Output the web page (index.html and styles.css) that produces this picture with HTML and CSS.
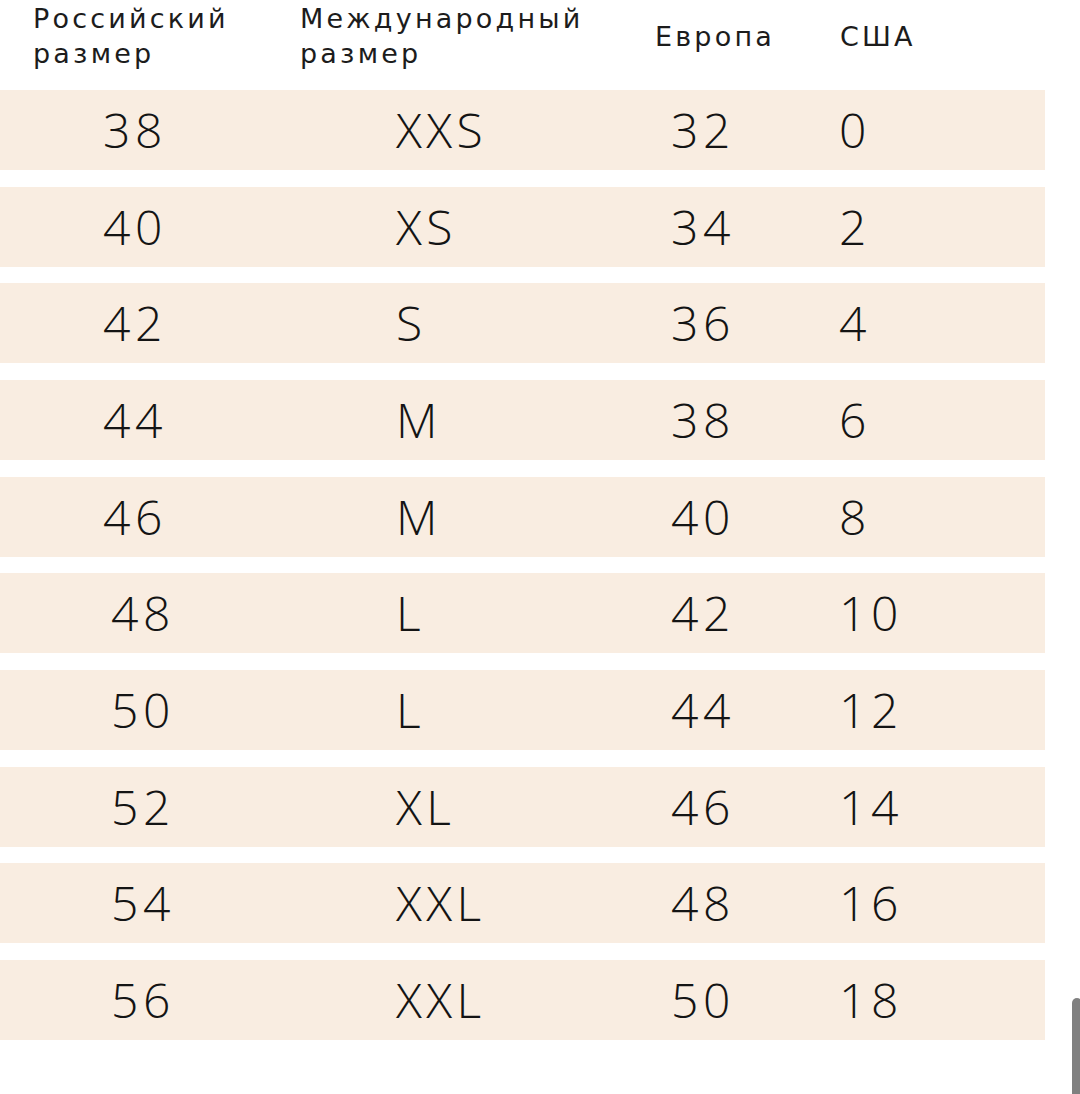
FILE: index.html
```html
<!DOCTYPE html>
<html lang="ru">
<head>
<meta charset="utf-8">
<title>Таблица размеров</title>
<link rel="stylesheet" href="styles.css">
</head>
<body>
<div class="page">
  <div class="head">
    <div class="hcell">Российский<br>размер</div>
    <div class="hcell">Международный<br>размер</div>
    <div class="hcell">Европа</div>
    <div class="hcell">США</div>
  </div>
  <div class="rows">
    <div class="row"><span class="c1">38</span><span>XXS</span><span>32</span><span>0</span></div>
    <div class="row"><span class="c1">40</span><span>XS</span><span>34</span><span>2</span></div>
    <div class="row"><span class="c1">42</span><span>S</span><span>36</span><span>4</span></div>
    <div class="row"><span class="c1">44</span><span>M</span><span>38</span><span>6</span></div>
    <div class="row"><span class="c1">46</span><span>M</span><span>40</span><span>8</span></div>
    <div class="row shift"><span class="c1">48</span><span>L</span><span>42</span><span>10</span></div>
    <div class="row shift"><span class="c1">50</span><span>L</span><span>44</span><span>12</span></div>
    <div class="row shift"><span class="c1">52</span><span>XL</span><span>46</span><span>14</span></div>
    <div class="row shift"><span class="c1">54</span><span>XXL</span><span>48</span><span>16</span></div>
    <div class="row shift"><span class="c1">56</span><span>XXL</span><span>50</span><span>18</span></div>
  </div>
  <div class="scrollbar"></div>
</div>
</body>
</html>
```

FILE: styles.css
```css
html, body {
  margin: 0;
  padding: 0;
  background: #ffffff;
}
body {
  font-family: "Open Sans", "DejaVu Sans", sans-serif;
  color: #1a1a1a;
  width: 1080px;
  height: 1094px;
  overflow: hidden;
}
.page {
  position: relative;
  width: 1080px;
  height: 1094px;
}
.head {
  display: grid;
  grid-template-columns: 267px 355px 185px 1fr;
  align-items: center;
  padding-left: 33px;
  height: 72px;
  margin-bottom: 18px;
  font-family: "DejaVu Sans", "Open Sans", sans-serif;
  font-size: 27px;
  line-height: 35px;
  letter-spacing: 3.2px;
  color: #1c1c1c;
}
.rows {
  display: flex;
  flex-direction: column;
  gap: 16.67px;
  width: 1045px;
}
.row {
  display: grid;
  grid-template-columns: 293px 275px 168px 1fr;
  align-items: center;
  height: 80px;
  padding-left: 103px;
  background: #f9ede1;
  font-size: 48px;
  font-weight: 300;
  line-height: 80px;
  letter-spacing: 4.5px;
  color: #141414;
}
.row.shift .c1 {
  margin-left: 8px;
}
.scrollbar {
  position: absolute;
  left: 1072px;
  top: 998px;
  width: 10px;
  height: 110px;
  background: #808080;
  border-radius: 5px;
}
```
